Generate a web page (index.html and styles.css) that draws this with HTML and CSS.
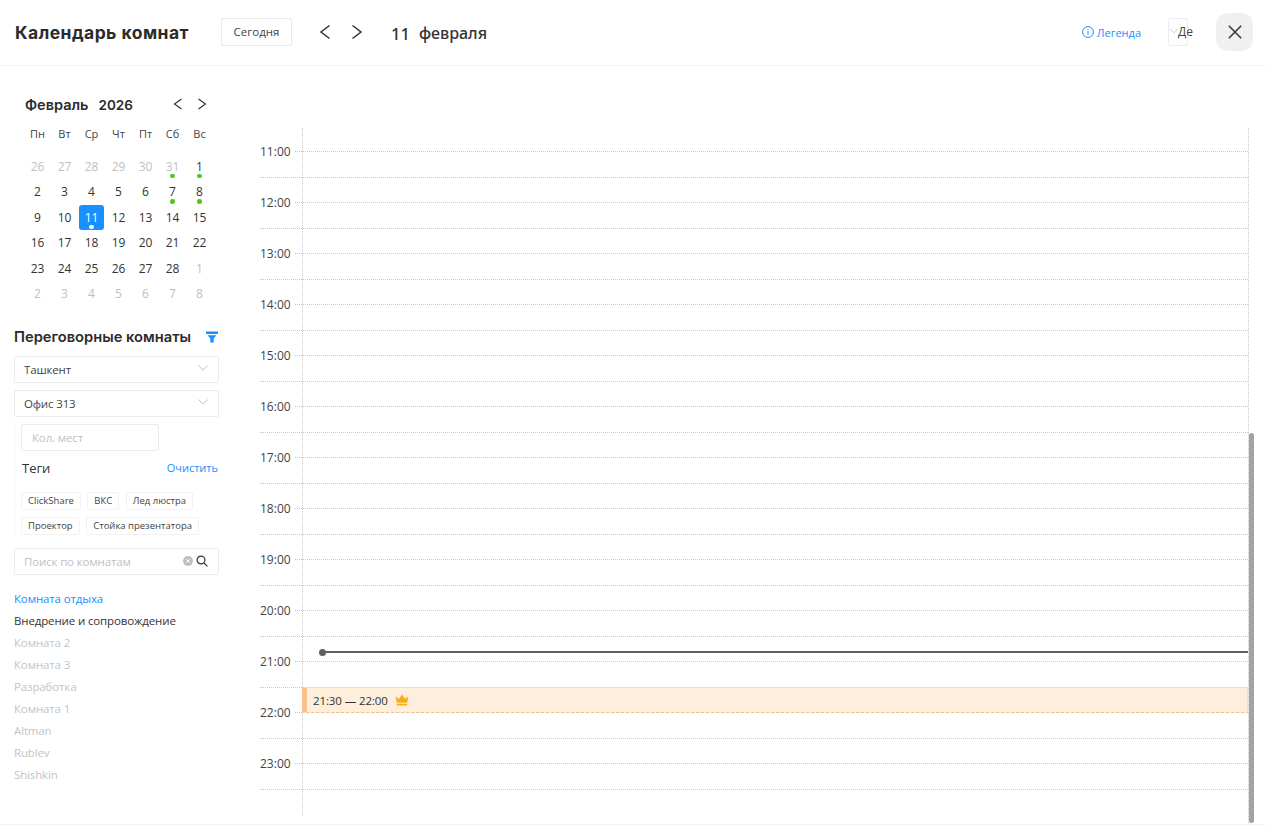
FILE: index.html
```html
<!DOCTYPE html>
<html lang="ru">
<head>
<meta charset="utf-8">
<title>Календарь комнат</title>
<link rel="stylesheet" href="styles.css">
</head>
<body>
<div class="app">
  <header class="topbar">
    <h1 class="title">Календарь комнат</h1>
    <button class="today">Сегодня</button>
    <div class="nav-arrows">
      <svg class="arrow" viewBox="0 0 12 16"><path d="M10.5 1.5 2 8l8.5 6.5"/></svg>
      <svg class="arrow" viewBox="0 0 12 16"><path d="M1.5 1.5 10 8l-8.5 6.5"/></svg>
    </div>
    <div class="cur-date"><span>11</span><span>февраля</span></div>
    <a class="legend">
      <svg class="legend-icon" viewBox="0 0 12 12"><circle cx="6" cy="6" r="5.4"/><path d="M6 5.2v3.6M6 3v1.1"/></svg>
      Легенда
    </a>
    <div class="view-select">
      <svg class="view-chev" viewBox="0 0 10 6"><path d="M.5.5 5 5.2 9.5.5"/></svg>
      <span class="view-text">Де</span>
    </div>
    <button class="close"><svg viewBox="0 0 14 14"><path d="M.8.8l12.4 12.4M13.2.8.8 13.2"/></svg></button>
  </header>

  <div class="body">
    <aside class="sidebar">
      <div class="month-head">
        <div class="month-name"><span>Февраль</span><span class="year">2026</span></div>
        <div class="month-nav">
          <svg viewBox="0 0 10 12"><path d="M8.5 1 1.5 6l7 5"/></svg>
          <svg viewBox="0 0 10 12"><path d="M1.5 1l7 5-7 5"/></svg>
        </div>
      </div>
      <div class="cal">
        <div class="wd">Пн</div><div class="wd">Вт</div><div class="wd">Ср</div><div class="wd">Чт</div><div class="wd">Пт</div><div class="wd">Сб</div><div class="wd">Вс</div>
        <div class="d off">26</div><div class="d off">27</div><div class="d off">28</div><div class="d off">29</div><div class="d off">30</div><div class="d off dot">31</div><div class="d dot">1</div>
        <div class="d">2</div><div class="d">3</div><div class="d">4</div><div class="d">5</div><div class="d">6</div><div class="d dot">7</div><div class="d dot">8</div>
        <div class="d">9</div><div class="d">10</div><div class="d sel dot">11</div><div class="d">12</div><div class="d">13</div><div class="d">14</div><div class="d">15</div>
        <div class="d">16</div><div class="d">17</div><div class="d">18</div><div class="d">19</div><div class="d">20</div><div class="d">21</div><div class="d">22</div>
        <div class="d">23</div><div class="d">24</div><div class="d">25</div><div class="d">26</div><div class="d">27</div><div class="d">28</div><div class="d off">1</div>
        <div class="d off">2</div><div class="d off">3</div><div class="d off">4</div><div class="d off">5</div><div class="d off">6</div><div class="d off">7</div><div class="d off">8</div>
      </div>

      <div class="rooms-head">
        <h2 class="rooms-title">Переговорные комнаты</h2>
        <svg class="filter" viewBox="0 0 12 12"><path d="M0 .5h12v2.6H0zM1.6 4.2h8.8L7.7 7.4v4.1H4.3V7.4z"/></svg>
      </div>
      <div class="field select"><span>Ташкент</span><svg viewBox="0 0 10 6"><path d="M.5.5 5 5.2 9.5.5"/></svg></div>
      <div class="field select"><span>Офис 313</span><svg viewBox="0 0 10 6"><path d="M.5.5 5 5.2 9.5.5"/></svg></div>
      <div class="filters">
        <div class="field seats">Кол. мест</div>
        <div class="tags-head"><span class="tags-label">Теги</span><a class="clear">Очистить</a></div>
        <div class="tags">
          <span class="tag">ClickShare</span><span class="tag">ВКС</span><span class="tag">Лед люстра</span>
          <span class="tag">Проектор</span><span class="tag">Стойка презентатора</span>
        </div>
      </div>
      <div class="field search">
        <span>Поиск по комнатам</span>
        <svg class="clear-x" viewBox="0 0 10 10"><circle cx="5" cy="5" r="5"/><path d="M3.3 3.3l3.4 3.4M6.7 3.3 3.3 6.7"/></svg>
        <svg class="loupe" viewBox="0 0 12 12"><circle cx="5" cy="5" r="3.9"/><path d="M8 8l3.4 3.4"/></svg>
      </div>
      <ul class="rooms">
        <li class="active">Комната отдыха</li>
        <li class="open">Внедрение и сопровождение</li>
        <li>Комната 2</li>
        <li>Комната 3</li>
        <li>Разработка</li>
        <li>Комната 1</li>
        <li>Altman</li>
        <li>Rublev</li>
        <li>Shishkin</li>
      </ul>
    </aside>

    <main class="schedule">
      <div class="grid">
        <div class="vline vline-l"></div>
        <div class="vline vline-r"></div>
        <div class="hour"><span class="time">11:00</span></div><div class="half"></div>
        <div class="hour"><span class="time">12:00</span></div><div class="half"></div>
        <div class="hour"><span class="time">13:00</span></div><div class="half"></div>
        <div class="hour"><span class="time">14:00</span></div><div class="half"></div>
        <div class="hour"><span class="time">15:00</span></div><div class="half"></div>
        <div class="hour"><span class="time">16:00</span></div><div class="half"></div>
        <div class="hour"><span class="time">17:00</span></div><div class="half"></div>
        <div class="hour"><span class="time">18:00</span></div><div class="half"></div>
        <div class="hour"><span class="time">19:00</span></div><div class="half"></div>
        <div class="hour"><span class="time">20:00</span></div><div class="half"></div>
        <div class="hour"><span class="time">21:00</span></div><div class="half"></div>
        <div class="hour"><span class="time">22:00</span></div><div class="half"></div>
        <div class="hour"><span class="time">23:00</span></div><div class="half"></div>
        <div class="now"></div>
        <div class="event">
          <span>21:30 — 22:00</span>
          <svg class="crown" viewBox="0 0 14 12"><path d="M.6 2.2 3.8 5 7 .6 10.2 5l3.2-2.8-1.2 6.6H1.8zM1.8 9.8h10.4v1.6H1.8z"/></svg>
        </div>
      </div>
      <div class="scrollbar"></div>
    </main>
  </div>
</div>
</body>
</html>
```
FILE: styles.css
```css
* { box-sizing: border-box; }
html, body { margin: 0; height: 100%; overflow: hidden; background: #fff; }
body { font-family: "Open Sans", "Noto Sans", sans-serif; font-size: 12px; color: #333; }
svg { display: block; fill: none; }
h1, h2, ul { margin: 0; padding: 0; }

.app { width: 1266px; height: 825px; display: flex; flex-direction: column; border-bottom: 1px solid #f3f3f3; }

.topbar { height: 66px; flex: none; display: flex; align-items: center; padding: 0 13px 2px 15px; border-bottom: 1px solid #f2f2f2; }
.title { font-family: Inter, "Noto Sans", sans-serif; font-size: 17.5px; font-weight: 700; color: #2b2b2b; width: 206px; letter-spacing: .45px; white-space: nowrap; margin-top: 2px; }
.today { width: 71px; height: 28px; background: #fff; border: 1px solid #e8e8e8; border-radius: 2px; font: 11.5px "Open Sans", sans-serif; color: #444; padding: 0; }
.nav-arrows { display: flex; gap: 20px; margin-left: 27px; }
.arrow { width: 12px; height: 16px; stroke: #333; stroke-width: 1.5; }
.cur-date { margin-left: 28px; display: flex; gap: 9px; font-family: "Noto Sans", sans-serif; font-size: 16px; font-weight: 500; color: #333; margin-top: 3px; }
.cur-date span:first-child { font-size: 16.5px; }
.legend { margin-left: auto; display: flex; align-items: center; gap: 3px; color: #1890ff; font-size: 11px; margin-top: 1px; }
.legend-icon { width: 12px; height: 12px; stroke: #1890ff; stroke-width: 1; }
.view-select { width: 20px; height: 28px; margin-left: 27px; border: 1px solid #ececec; border-radius: 2px; display: flex; align-items: center; padding-left: 1px; white-space: nowrap; }
.view-chev { width: 8px; height: 6px; flex: none; stroke: #bfbfbf; stroke-width: 1; margin-top: -2px; }
.view-text { font-size: 12px; color: #444; }
.close { width: 37px; height: 38px; margin-left: 28px; border: 0; padding: 0; background: #f0f0f0; border-radius: 12px; display: flex; align-items: center; justify-content: center; }
.close svg { width: 14px; height: 14px; stroke: #333; stroke-width: 1.5; }

.body { flex: 1; display: flex; min-height: 0; }

.sidebar { width: 260px; flex: none; padding: 27px 41px 0 14px; }
.month-head { display: flex; align-items: center; height: 22px; padding-left: 11px; }
.month-name { display: flex; align-items: baseline; gap: 10px; font-family: Inter, "Noto Sans", sans-serif; font-size: 14.5px; font-weight: 600; color: #2b2b2b; width: 148px; }
.year { font-size: 13.5px; }
.month-nav { display: flex; gap: 14px; }
.month-nav svg { width: 10px; height: 12px; stroke: #333; stroke-width: 1.2; }

.cal { display: grid; grid-template-columns: repeat(7, 27px); grid-template-rows: 29.5px; grid-auto-rows: 25.5px; margin-left: 10px; margin-top: 9px; }
.wd { height: 25.5px; text-align: center; font-size: 11px; line-height: 20px; color: #444; }
.d { position: relative; text-align: center; font-size: 12px; line-height: 25px; color: #333; border-radius: 3px; }
.off { color: #bfbfbf; }
.dot::after { content: ""; position: absolute; left: 50%; bottom: 1px; width: 4.5px; height: 4.5px; margin-left: -2.25px; border-radius: 50%; background: #52c41a; }
.sel { background: #1890ff; color: #fff; margin: 0 .75px; }
.sel::after { background: #fff; }

.rooms-head { display: flex; align-items: center; justify-content: space-between; margin-top: 19px; height: 23px; padding-right: 1px; }
.rooms-title { font-family: Inter, "Noto Sans", sans-serif; font-size: 14.7px; font-weight: 600; color: #2b2b2b; white-space: nowrap; }
.filter { width: 12px; height: 12px; fill: #1890ff; }

.field { height: 27px; border: 1px solid #ececec; border-radius: 2px; display: flex; align-items: center; font-size: 11.5px; letter-spacing: -.15px; }
.select { justify-content: space-between; padding: 0 10px 0 9px; margin-top: 7px; color: #444; }
.select span { margin-top: 1px; }
.select svg { width: 10px; height: 6px; stroke: #bfbfbf; stroke-width: 1; margin-top: -2px; }
.filters { margin-top: 7px; height: 111px; border-left: 1px solid #f5f5f5; padding-left: 6px; }
.seats { width: 138px; padding-left: 10px; color: #bfbfbf; }
.tags-head { display: flex; align-items: center; justify-content: space-between; height: 34px; padding: 0 1px; }
.tags-label { font-size: 13px; color: #333; }
.clear { color: #1890ff; font-size: 11px; }
.tags { display: flex; flex-wrap: wrap; gap: 7px 6.5px; margin-top: 7px; }
.tag { height: 18px; padding: 0 6px; border: 1px solid #f2f2f2; border-radius: 2px; font-size: 9.5px; line-height: 16px; color: #444; white-space: nowrap; }
.search { margin-top: 13px; padding: 0 10px 0 9px; color: #bfbfbf; }
.search span { flex: 1; margin-top: 1px; }
.clear-x { width: 10px; height: 10px; fill: #bfbfbf; stroke: #fff; stroke-width: 1; }
.clear-x circle { stroke: none; }
.loupe { width: 12px; height: 12px; margin-left: 3px; stroke: #333; stroke-width: 1.2; }

.rooms { list-style: none; margin-top: 13px; }
.rooms li { height: 22px; line-height: 22px; font-size: 11.5px; letter-spacing: -.14px; color: #c4c4c4; white-space: nowrap; }
.rooms .active { color: #1890ff; }
.rooms .open { color: #333; }

.schedule { flex: 1; position: relative; min-width: 0; }
.grid { position: relative; width: 988px; margin-top: 62px; padding-top: 23px; height: 688px; }
.vline { position: absolute; top: 0; bottom: 0; width: 0; border-left: 1px dotted #c8c8c8; }
.vline-l { left: 42px; }
.vline-r { left: 988px; height: 695px; }
.hour { position: relative; height: 26px; margin-left: 35px; border-top: 1px dotted #c8c8c8; }
.half { height: 25px; border-top: 1px dotted #c8c8c8; }
.time { position: absolute; right: 100%; top: -9px; width: 35px; padding-right: 7px; text-align: right; font-size: 12px; line-height: 18px; color: #444; white-space: nowrap; }

.now { position: absolute; left: 62px; right: 0; top: 523px; height: 0; border-top: 2px solid #5f5f5f; }
.now::before { content: ""; position: absolute; left: -3px; top: -4.5px; width: 7px; height: 7px; border-radius: 50%; background: #5f5f5f; }
.event { position: absolute; left: 42px; right: 0; top: 559px; height: 26px; display: flex; align-items: center; gap: 7px; padding-left: 6px; background: #fdefdc; border: 1px solid #f6dcbd; border-left: 5px solid #f9c089; border-bottom: 1px dashed #eebd8a; border-radius: 3px; font-size: 11.5px; letter-spacing: -.1px; color: #333; }
.crown { width: 14px; height: 12px; fill: #faad14; }

.scrollbar { position: absolute; left: 989px; top: 367px; width: 5px; height: 390px; border-radius: 3px; background: #a3a3a3; }
```
